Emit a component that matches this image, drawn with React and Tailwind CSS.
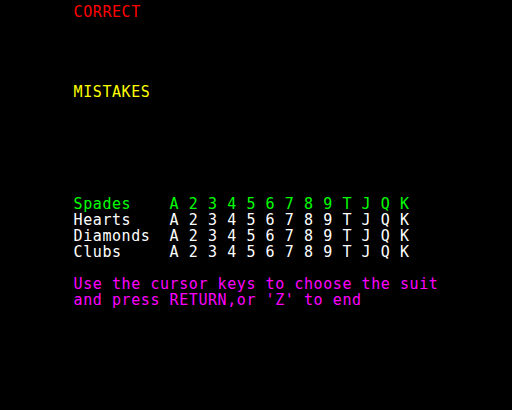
// App.jsx
import React from 'react';

const ROWS = 25;

const lines = {
    0: { text: 'CORRECT', color: 'text-[#ff0000]' },
    5: { text: 'MISTAKES', color: 'text-[#ffff00]' },
    12: { text: 'Spades    A 2 3 4 5 6 7 8 9 T J Q K', color: 'text-[#00ff00]' },
    13: { text: 'Hearts    A 2 3 4 5 6 7 8 9 T J Q K', color: 'text-white' },
    14: { text: 'Diamonds  A 2 3 4 5 6 7 8 9 T J Q K', color: 'text-white' },
    15: { text: 'Clubs     A 2 3 4 5 6 7 8 9 T J Q K', color: 'text-white' },
    17: { text: 'Use the cursor keys to choose the suit', color: 'text-[#ff00ff]' },
    18: { text: "and press RETURN,or 'Z' to end", color: 'text-[#ff00ff]' },
};

const App = () => {
    const rows = Array.from({ length: ROWS }, (_, i) => i);

    return (
        <div className="w-[512px] h-[410px] bg-black overflow-hidden">
            <div className="pl-[73.6px] pt-[3.75px] font-['DejaVu_Sans_Mono',monospace] text-[15px] tracking-[0.57px]">
                {rows.map((i) => {
                    const line = lines[i];
                    return (
                        <div key={i} className={`h-4 leading-4 whitespace-pre ${line ? line.color : ''}`}>
                            {line ? line.text : ' '}
                        </div>
                    );
                })}
            </div>
        </div>
    );
};

export default App;
